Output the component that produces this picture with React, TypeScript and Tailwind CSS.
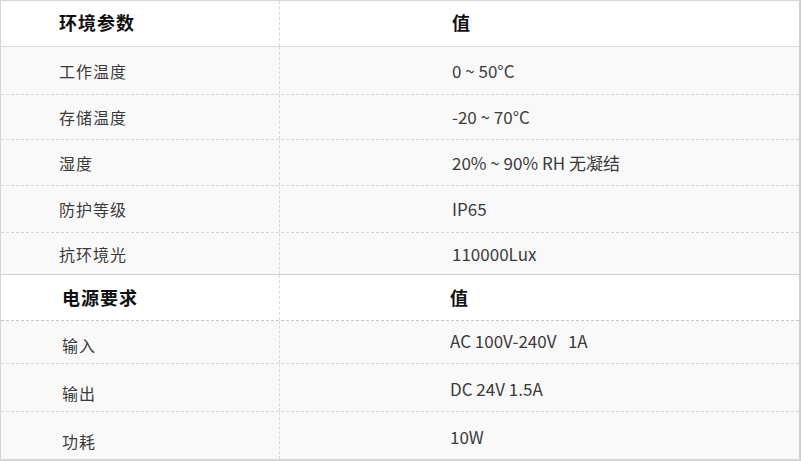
const env = [
  { k: "工作温度", v: "0 ~ 50°C", h: "h-[48px]" },
  { k: "存储温度", v: "-20 ~ 70°C", h: "h-[45px]" },
  { k: "湿度", v: "20% ~ 90% RH 无凝结", h: "h-[46px]" },
  { k: "防护等级", v: "IP65", h: "h-[47px]" },
  { k: "抗环境光", v: "110000Lux", h: "h-[42px]" },
];

const power = [
  { k: "输入", v: "AC 100V-240V\u00a0\u00a0 1A", h: "h-[43px]" },
  { k: "输出", v: "DC 24V 1.5A", h: "h-[48px]" },
  { k: "功耗", v: "10W", h: "h-[47px]" },
];

const font = { fontFamily: '"Noto Sans CJK SC", "Noto Sans", sans-serif' };

export default function App() {
  return (
    <div className="w-[802px] h-[461px] bg-white" style={font}>
      <div className="w-[801px] border border-[#d6d6d6] border-r-2 border-r-[#d0d0d0] border-b-2">
        {/* 环境参数 */}
        <div className="grid grid-cols-[279px_1fr] h-[46px] bg-white border-b border-[#d8d8d8]">
          <div className="flex items-center pb-[3px] pl-[58px] border-r border-dashed border-[#d8d8d8] text-[18px] font-bold text-[#111] tracking-[1px]">
            环境参数
          </div>
          <div className="flex items-center pb-[3px] pl-[172px] text-[18px] font-bold text-[#111]">值</div>
        </div>
        {env.map((r, i) => (
          <div
            key={r.k}
            className={
              "grid grid-cols-[279px_1fr] bg-[#faf9fa] border-b " +
              r.h +
              " " +
              (i < env.length - 1 ? "border-dashed border-[#d4d4d4]" : "border-[#d0d0d0]")
            }
          >
            <div className="flex items-center pl-[58px] border-r border-dashed border-[#d8d8d8] text-[16px] text-[#3a3a3a] tracking-[1px]">
              {r.k}
            </div>
            <div className="flex items-center pl-[172px] text-[17px] text-[#3a3a3a]">{r.v}</div>
          </div>
        ))}

        {/* 电源要求 */}
        <div className="grid grid-cols-[279px_1fr] h-[46px] bg-white border-b border-dashed border-[#c8c8c8]">
          <div className="flex items-center pl-[61px] border-r border-dashed border-[#d8d8d8] text-[18px] font-bold text-[#111] tracking-[1px]">
            电源要求
          </div>
          <div className="flex items-center pl-[170px] text-[18px] font-bold text-[#111]">值</div>
        </div>
        {power.map((r, i) => (
          <div
            key={r.k}
            className={
              "grid grid-cols-[279px_1fr] bg-[#faf9fa] " +
              r.h +
              " " +
              (i < power.length - 1 ? "border-b border-dashed border-[#d4d4d4]" : "")
            }
          >
            <div className="flex items-end pb-[6px] pl-[61px] border-r border-dashed border-[#d8d8d8] text-[16px] text-[#3a3a3a] tracking-[1px]">
              {r.k}
            </div>
            <div className="flex items-end pb-[10px] pl-[170px] text-[17px] text-[#3a3a3a]">{r.v}</div>
          </div>
        ))}
      </div>
    </div>
  );
}
